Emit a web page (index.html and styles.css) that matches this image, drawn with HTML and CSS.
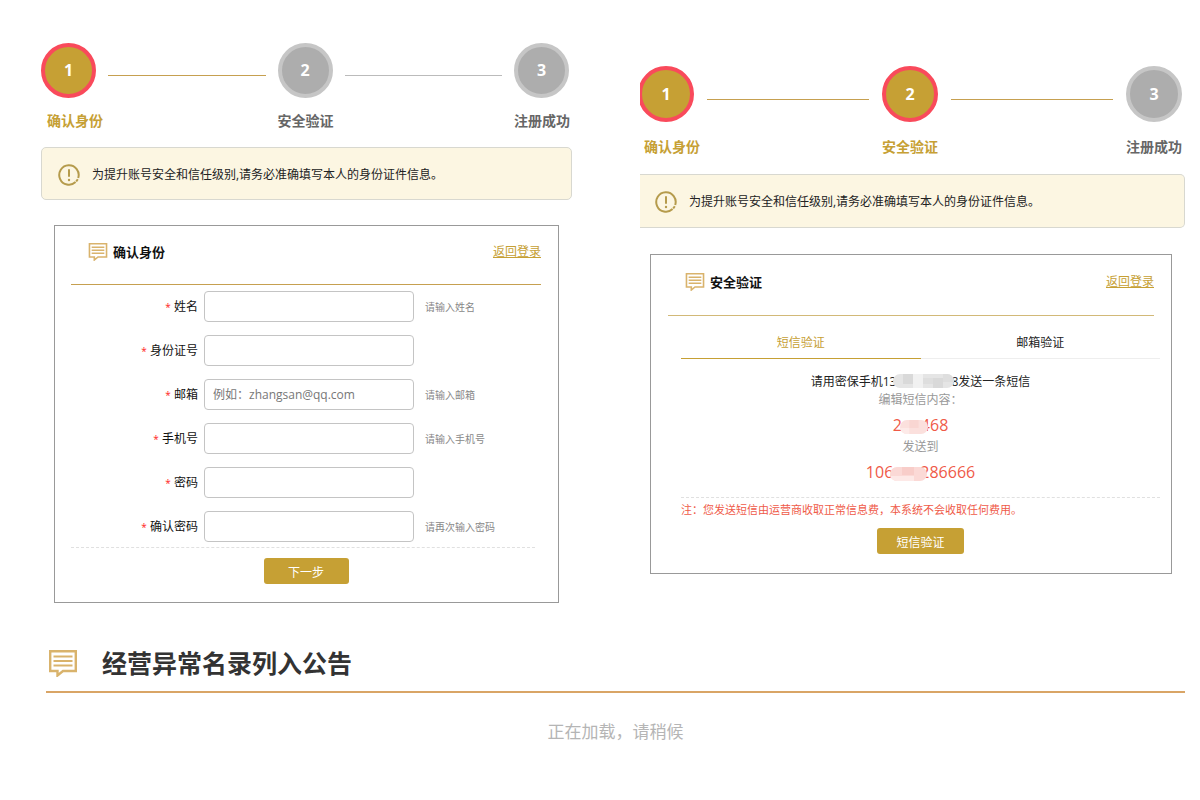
FILE: index.html
```html
<!DOCTYPE html>
<html lang="zh-CN">
<head>
	<meta charset="UTF-8">
	<meta name="viewport" content="width=device-width, initial-scale=1.0">
	<link rel="stylesheet" href="styles.css">
	<title>注册</title>
</head>
<body>
	<svg class="defs" aria-hidden="true">
		<symbol id="msg" viewBox="0 0 28 27">
			<path d="M1.2 1.2H26.8V21H14L8.5 25.5V21H1.2Z" fill="none" stroke="currentColor" stroke-width="2.4"/>
			<path d="M4.5 6.5H23.5M4.5 11H23.5M4.5 15.5H23.5" stroke="currentColor" stroke-width="2.2"/>
		</symbol>
		<symbol id="warn" viewBox="0 0 22 22">
			<path d="M17.6 18.1A9.7 9.7 0 1 1 20.2 14" fill="none" stroke="currentColor" stroke-width="2"/>
			<path d="M19.8 15.2L18.2 17.5" stroke="currentColor" stroke-width="2"/>
			<path d="M11 5.3V12.8" stroke="currentColor" stroke-width="2"/>
			<circle cx="11" cy="16" r="1.2" fill="currentColor"/>
		</symbol>
	</svg>
	<main class="panels">
		<section class="panel">
			<ol class="steps">
				<li class="step on"><span class="num">1</span><span class="name">确认身份</span></li>
				<li class="line on"></li>
				<li class="step"><span class="num">2</span><span class="name">安全验证</span></li>
				<li class="line"></li>
				<li class="step"><span class="num">3</span><span class="name">注册成功</span></li>
			</ol>
			<div class="notice">
				<svg class="warn"><use href="#warn"/></svg>
				<p>为提升账号安全和信任级别,请务必准确填写本人的身份证件信息。</p>
			</div>
			<form class="card">
				<div class="card-head">
					<svg class="msg"><use href="#msg"/></svg>
					<h2>确认身份</h2>
					<a href="#">返回登录</a>
				</div>
				<div class="fields">
					<div class="field">
						<label for="name"><i>*</i> 姓名</label>
						<input type="text" id="name">
						<span class="hint">请输入姓名</span>
					</div>
					<div class="field">
						<label for="idcard"><i>*</i> 身份证号</label>
						<input type="text" id="idcard">
					</div>
					<div class="field">
						<label for="email"><i>*</i> 邮箱</label>
						<input type="email" id="email" placeholder="例如：zhangsan@qq.com">
						<span class="hint">请输入邮箱</span>
					</div>
					<div class="field">
						<label for="phone"><i>*</i> 手机号</label>
						<input type="tel" id="phone">
						<span class="hint">请输入手机号</span>
					</div>
					<div class="field">
						<label for="pwd"><i>*</i> 密码</label>
						<input type="password" id="pwd">
					</div>
					<div class="field">
						<label for="pwd2"><i>*</i> 确认密码</label>
						<input type="password" id="pwd2">
						<span class="hint">请再次输入密码</span>
					</div>
				</div>
				<button type="button" class="btn">下一步</button>
			</form>
		</section>

		<section class="panel second">
			<ol class="steps">
				<li class="step on"><span class="num">1</span><span class="name">确认身份</span></li>
				<li class="line on"></li>
				<li class="step on"><span class="num">2</span><span class="name">安全验证</span></li>
				<li class="line on"></li>
				<li class="step"><span class="num">3</span><span class="name">注册成功</span></li>
			</ol>
			<div class="notice">
				<svg class="warn"><use href="#warn"/></svg>
				<p>为提升账号安全和信任级别,请务必准确填写本人的身份证件信息。</p>
			</div>
			<div class="card">
				<div class="card-head">
					<svg class="msg"><use href="#msg"/></svg>
					<h2>安全验证</h2>
					<a href="#">返回登录</a>
				</div>
				<div class="verify">
					<div class="tabs">
						<button type="button" class="tab on">短信验证</button>
						<button type="button" class="tab">邮箱验证</button>
					</div>
					<div class="sms">
						<p>请用密保手机13<svg class="mask mask-phone" viewBox="0 0 61 14" preserveAspectRatio="none" aria-hidden="true"><path fill="#e5e5e5" d="M0 0H61V14H0Z"/><path fill="#d9d9d9" d="M10 0H20V10H10ZM40 4H50V14H40Z"/><path fill="#f1f1f1" d="M20 0H30V14H20Z"/><path fill="#dedede" d="M30 4H40V10H30ZM50 0H61V8H50Z"/></svg>8发送一条短信</p>
						<p class="gray">编辑短信内容：</p>
						<p class="red">2<svg class="mask mask-code" viewBox="0 0 30 14" preserveAspectRatio="none" aria-hidden="true"><path fill="#fbe0dd" d="M0 0H30V14H0Z"/><path fill="#f9d6d2" d="M10 0H20V8H10Z"/><path fill="#fdeae8" d="M0 8H10V14H0Z"/></svg>468</p>
						<p class="gray">发送到</p>
						<p class="red">106<svg class="mask mask-dest" viewBox="0 0 37 14" preserveAspectRatio="none" aria-hidden="true"><path fill="#fbd9d6" d="M0 0H37V14H0Z"/><path fill="#f8cdc9" d="M12 0H24V8H12Z"/><path fill="#fde9e7" d="M0 9H24V14H0Z"/></svg>286666</p>
					</div>
					<p class="fee">注：您发送短信由运营商收取正常信息费，本系统不会收取任何费用。</p>
					<button type="button" class="btn">短信验证</button>
				</div>
			</div>
		</section>
	</main>

	<section class="bulletin">
		<div class="bulletin-head">
			<svg class="msg"><use href="#msg"/></svg>
			<h1>经营异常名录列入公告</h1>
		</div>
		<p class="loading">正在加载，请稍候</p>
	</section>
</body>
</html>
```

FILE: styles.css
```css
*{
	box-sizing:border-box;
}
body{
	margin:0;
	padding:43px 15px 0 41px;
	background:#fff;
	color:#222;
	font-family:"Open Sans", "Noto Sans CJK SC", sans-serif;
	font-size:12px;
	line-height:18px;
}
h1, h2, p, ol{
	margin:0;
	padding:0;
}
button, input{
	font:inherit;
}
.defs{
	display:none;
}
.panels{
	display:grid;
	grid-template-columns:531fr 545fr;
	gap:68px;
	align-items:start;
}
.second{
	padding-top:23px;
	overflow:hidden;
}

/* steps */
.steps{
	display:flex;
	list-style:none;
	margin-right:3px;
}
.second .steps{
	margin-left:-2px;
}
.step{
	width:55px;
	color:#666;
}
.num{
	display:block;
	height:55px;
	border:4px solid #c6c6c6;
	border-radius:50%;
	background:#adadad;
	color:#fff;
	font-size:16px;
	font-weight:bold;
	line-height:46px;
	text-align:center;
}
.second .step{
	width:56px;
}
.second .num{
	height:56px;
	line-height:48px;
}
.name{
	display:block;
	margin-top:13px;
	font-size:14px;
	font-weight:bold;
	line-height:20px;
	white-space:nowrap;
}
.second .name{
	margin-top:15px;
}
.step:first-child .name{
	padding-left:6px;
}
.step.on{
	color:#c6a034;
}
.step.on .num{
	background:#c6a034;
	border-color:#f94a5b;
}
.line{
	flex:1;
	height:1px;
	margin:32px 12px 0;
	background:#bbb;
}
.second .line{
	margin:33px 13px 0;
}
.line.on{
	background:#c6a050;
}

.notice{
	display:flex;
	align-items:center;
	gap:12px;
	margin-top:16px;
	padding:15px 16px 13px;
	min-height:53px;
	border:1px solid #d8d8d0;
	border-radius:5px;
	background:#fcf6e2;
}
.second .notice{
	margin-top:17px;
	padding-left:15px;
	min-height:54px;
	border-left:0;
	border-radius:0 5px 5px 0;
}
.warn{
	width:22px;
	height:22px;
	color:#b59b4c;
}

/* card */
.card{
	margin:25px 13px 0;
	padding:0 17px 18px 16px;
	border:1px solid #999;
}
.second .card{
	margin:26px 13px 0 10px;
	padding:0 17px 19px;
}
.card-head{
	display:flex;
	align-items:center;
	height:59px;
	padding:0 0 6px 17px;
	border-bottom:1px solid #c6a050;
}
.second .card-head{
	height:61px;
	border-bottom-color:#d2b978;
}
.card-head .msg{
	width:20px;
	height:18px;
}
.msg{
	color:#d9b36c;
}
h2{
	margin-left:5px;
	color:#111;
	font-size:13px;
	line-height:18px;
}
.card-head a{
	margin-left:auto;
	color:#c6a034;
}
.fields{
	display:grid;
	gap:13px;
	padding:6px 0 5px;
	margin-right:6px;
	border-bottom:1px dashed #e0e0e0;
}
.field{
	display:grid;
	grid-template-columns:127px 210px 1fr;
	align-items:center;
	height:31px;
}
.field label{
	color:#111;
	text-align:right;
}
.field i{
	color:#f22;
	font-size:10px;
	font-style:normal;
}
.field input{
	height:31px;
	margin-left:6px;
	padding:0 8px;
	width:210px;
	border:1px solid #c4c4c4;
	border-radius:4px;
}
.field input::placeholder{
	color:#777;
}
.hint{
	margin-left:17px;
	color:#888;
	font-size:10px;
}
.btn{
	display:block;
	margin:10px auto 0;
	min-width:85px;
	height:26px;
	padding:4px 18px 0;
	border:0;
	border-radius:3px;
	background:#c6a034;
	color:#fff;
}

/* sms verification */
.verify{
	margin:8px -6px 0 13px;
}
.verify .btn{
	margin-top:9px;
	padding:4px 19px 0;
}
.tabs{
	display:flex;
}
.tab{
	flex:1;
	height:35px;
	padding:3px 0 0;
	border:0;
	border-bottom:1px solid #eee;
	background:none;
	color:#222;
}
.tab.on{
	color:#c6a034;
	border-bottom-color:#c6a034;
}
.sms{
	padding:14px 0 12px;
	border-bottom:1px dashed #e0e0e0;
	text-align:center;
}
.gray{
	color:#999;
}
.red{
	padding-top:4px;
	color:#ef5a48;
	font-size:16px;
	line-height:25px;
}
.mask{
	position:relative;
	height:14px;
	border-radius:7px;
	vertical-align:middle;
}
.mask-phone{
	width:61px;
	margin:0 -3px;
	vertical-align:-2px;
}
.mask-code{
	width:28px;
	margin:0 -7px 0 -2px;
}
.mask-dest{
	width:37px;
	margin:0 -7px 0 -3px;
}
.fee{
	margin-top:3px;
	color:#ef5a48;
	font-size:11px;
}

/* bulletin */
.bulletin{
	margin:40px 0 0 5px;
}
.bulletin-head{
	display:flex;
	align-items:center;
	gap:25px;
	padding:0 3px 8px;
	border-bottom:2px solid #d9a566;
}
.bulletin-head .msg{
	width:28px;
	height:27px;
}
h1{
	color:#333;
	font-size:25px;
	line-height:40px;
}
.loading{
	margin-top:26px;
	color:#b5b5b5;
	font-size:17px;
	line-height:26px;
	text-align:center;
}
```
